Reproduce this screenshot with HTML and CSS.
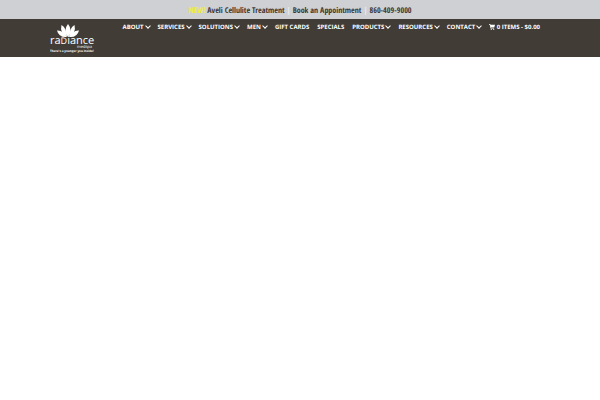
FILE: index.html
```html
<!DOCTYPE html>
<html lang="en">
    <head>
        <meta charset="utf-8">
        <title>Radiance Medspa</title>
        <link rel="stylesheet" href="styles.css">
    </head>
    <body>
        <div class="topbar">
            <a href="#"><span class="new">NEW!</span> Aveli Cellulite Treatment</a>
            <span class="sep">|</span>
            <a href="#">Book an Appointment</a>
            <span class="sep">|</span>
            <a href="#">860-409-9000</a>
        </div>
        <header class="header">
            <a class="logo" href="#" aria-label="Radiance Medspa">
                <svg width="46" height="30" viewBox="0 0 46 30">
                    <g fill="#fff">
                        <path d="M18 0 Q23 6 18 13 Q13 6 18 0Z"/>
                        <path d="M11.500 1 Q16.500 4 17 12.500 Q9.500 9 11.500 1Z"/>
                        <path d="M24.500 1 Q19.500 4 19 12.500 Q26.500 9 24.500 1Z"/>
                        <path d="M7 6.500 Q13 6 17 13 Q9 14 7 6.500Z"/>
                        <path d="M29 6.500 Q23 6 19 13 Q27 14 29 6.500Z"/>
                    </g>
                    <text class="logo-name" x="0" y="20">ra<tspan class="logo-cap">D</tspan>iance</text>
                    <text class="logo-sub" x="27" y="24">medspa</text>
                    <text class="logo-tag" x="0" y="28">There's a younger you inside!</text>
                </svg>
            </a>
            <nav class="nav">
                <a class="more" href="#">ABOUT</a>
                <a class="more" href="#">SERVICES</a>
                <a class="more" href="#">SOLUTIONS</a>
                <a class="more" href="#">MEN</a>
                <a href="#">GIFT CARDS</a>
                <a href="#">SPECIALS</a>
                <a class="more" href="#">PRODUCTS</a>
                <a class="more" href="#">RESOURCES</a>
                <a class="more" href="#">CONTACT</a>
                <a href="#">
                    <svg class="cart" width="6" height="6" viewBox="0 0 12 12"><path fill="#fff" d="M0 0h2.500l.5 1.500h9l-1.500 5.500h-6.500l.2 1h6v1.200h-7l-1.700-7.700h-1.500z"/><circle fill="#fff" cx="4.500" cy="10.700" r="1.200"/><circle fill="#fff" cx="9.500" cy="10.700" r="1.200"/></svg>
                    0 ITEMS - $0.00
                </a>
            </nav>
        </header>
    </body>
</html>
```
FILE: styles.css
```css
body {
    margin: 0;
    background: #fff;
    font-family: "Open Sans", sans-serif;
    text-rendering: geometricPrecision;
}
a {
    color: inherit;
    text-decoration: none;
}
.topbar {
    display: flex;
    justify-content: center;
    gap: 2px;
    padding: 5px 0 2px;
    background: #cfd0d4;
    color: #3d3833;
    font: bold 8px/12px "Open Sans Condensed", "Liberation Sans Narrow", sans-serif;
}
.new {
    color: #f0ee35;
}
.sep {
    color: #eee;
}
.header {
    display: flex;
    justify-content: space-between;
    align-items: flex-start;
    padding: 5px 10% 3px 50px;
    background: #423c36;
    color: #fff;
}
.logo svg {
    display: block;
}
.logo text {
    fill: #fff;
}
.logo-name {
    font-size: 11px;
}
.logo-cap {
    font-size: 9px;
}
.logo-sub {
    font-size: 4px;
    font-weight: 500;
}
.logo-tag {
    font-size: 3px;
    font-weight: 700;
}
.nav {
    display: flex;
    align-items: baseline;
    gap: 8px;
    font-size: 6px;
    font-weight: 700;
    line-height: 6px;
    white-space: nowrap;
}
.more::after {
    content: "";
    display: inline-block;
    width: 3px;
    height: 3px;
    margin: 0 0 1px 2px;
    border: solid #fff;
    border-width: 0 1px 1px 0;
    transform: rotate(45deg);
}
.cart {
    vertical-align: -1px;
}
```
